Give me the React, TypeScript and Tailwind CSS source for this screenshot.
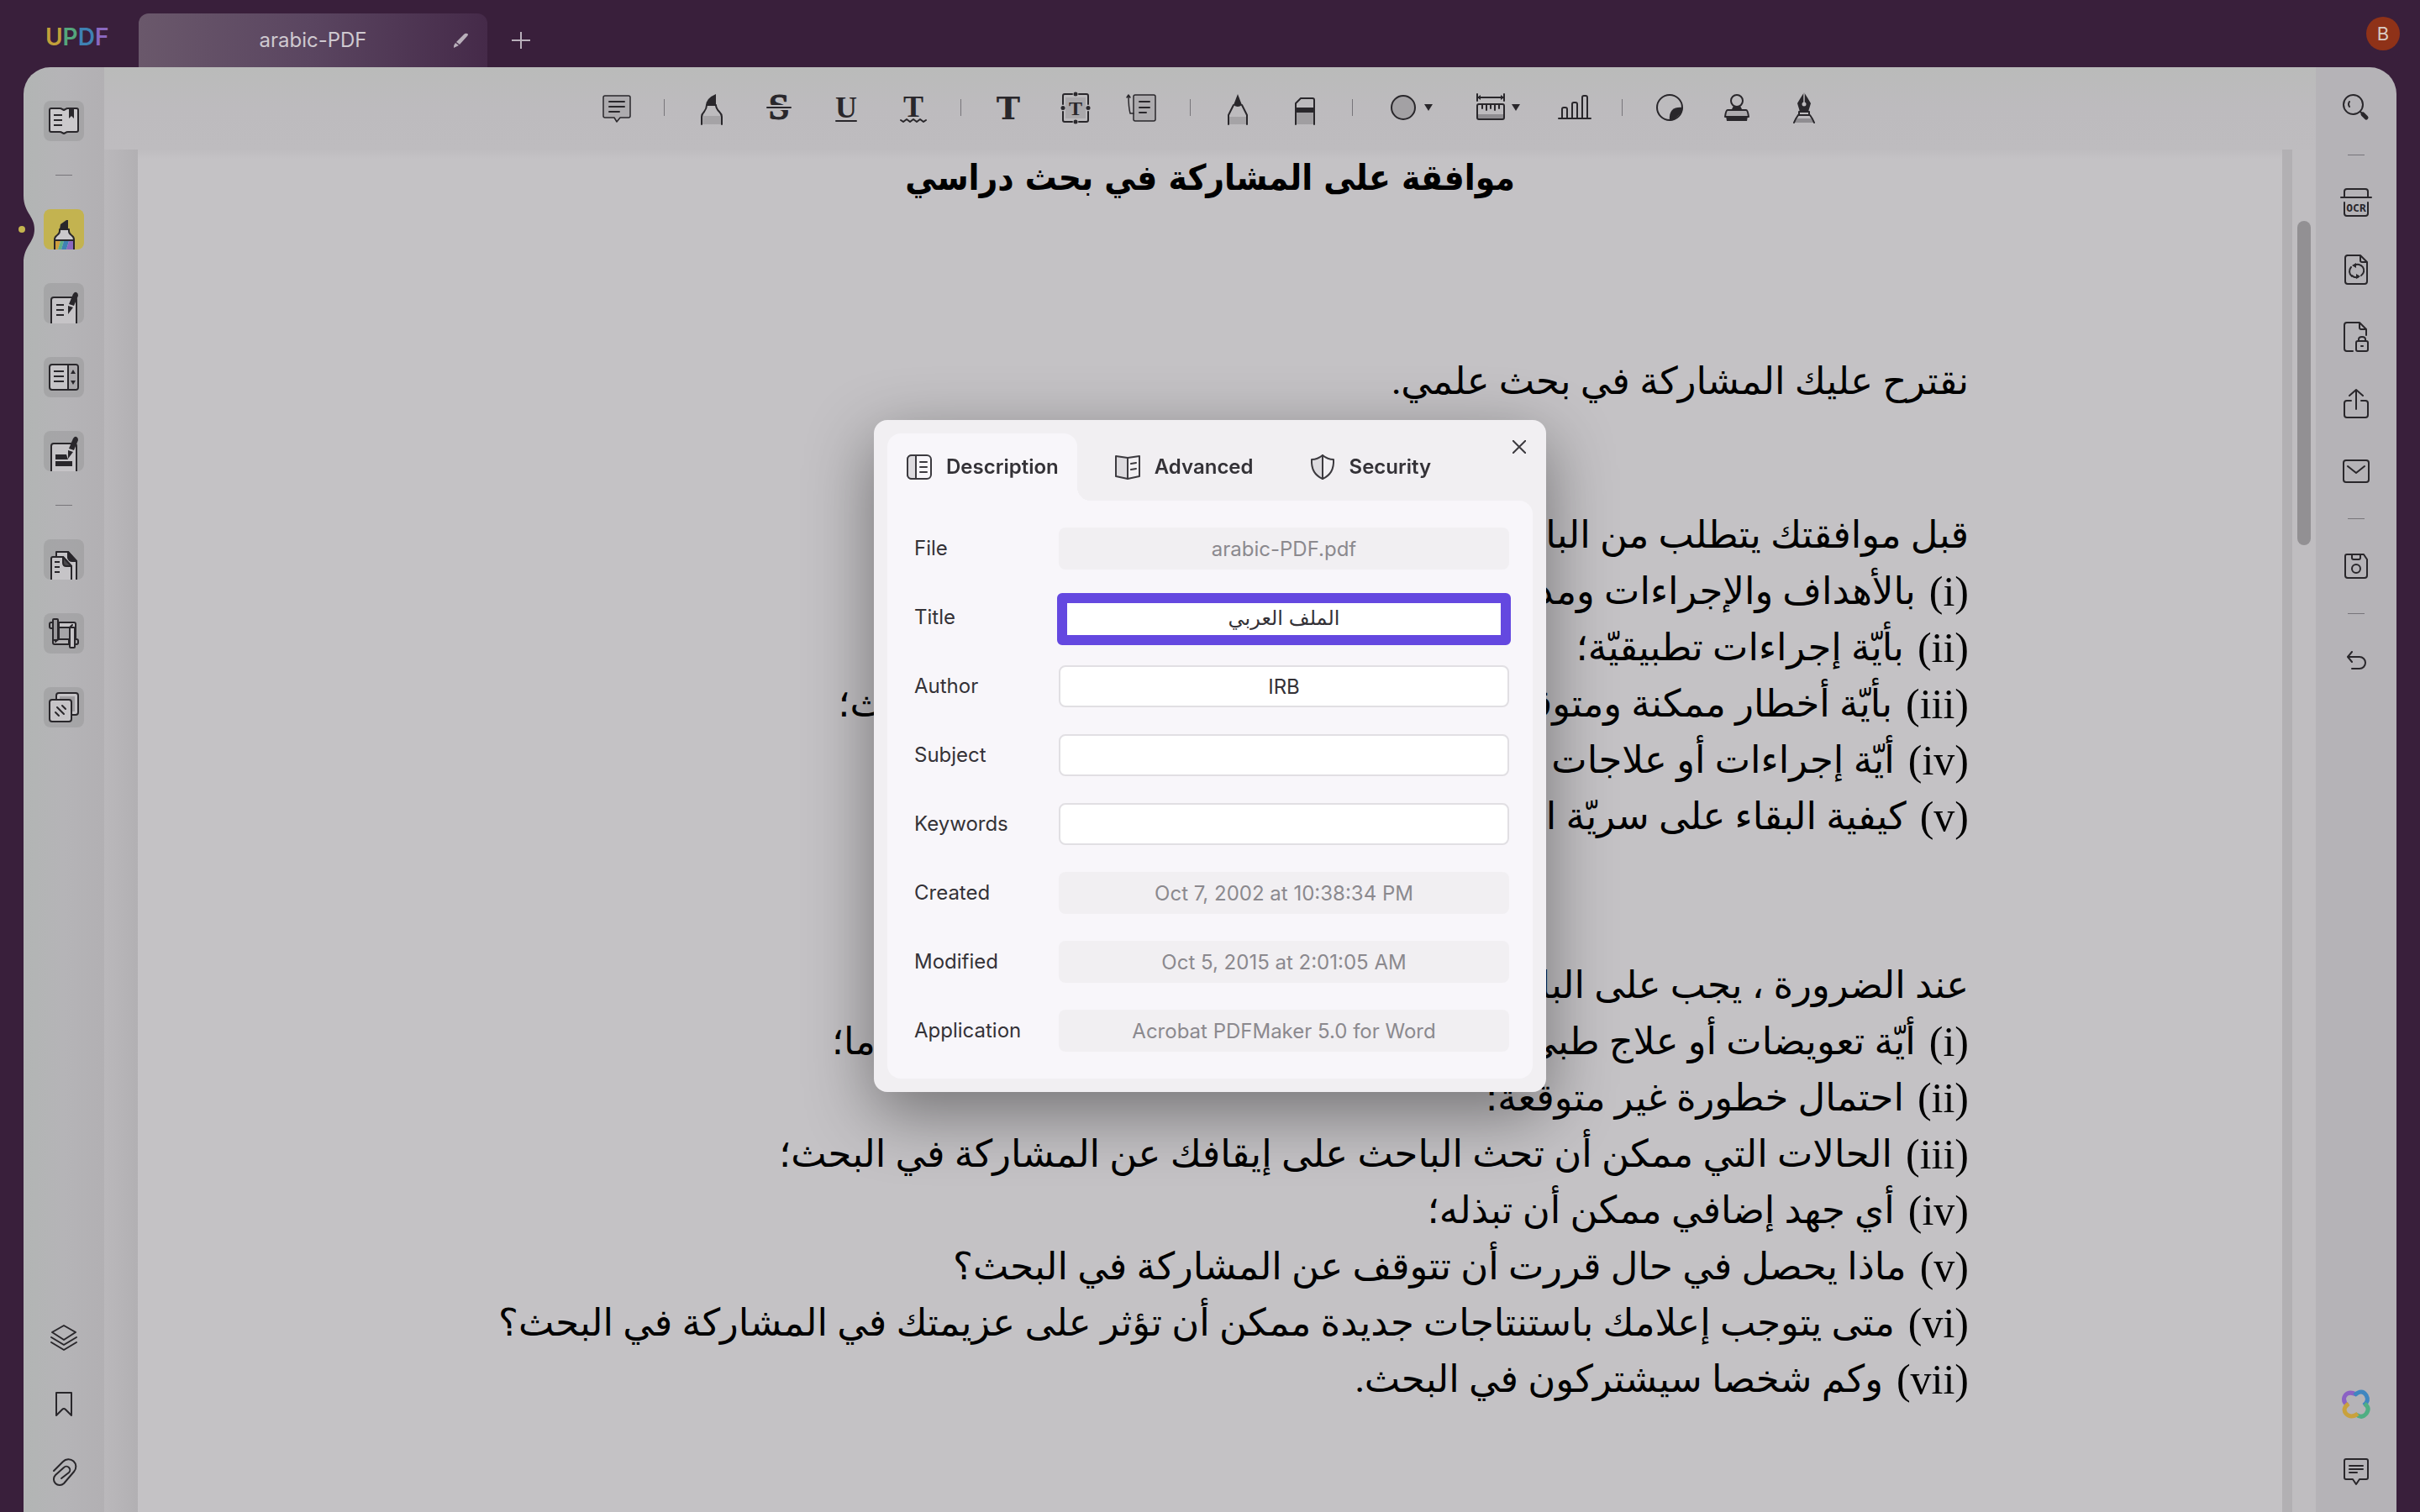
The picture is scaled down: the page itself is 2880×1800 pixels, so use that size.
import type { ReactNode } from "react"
import { useState } from "react"

const INK = "#29272b"

function Icon({ children, className = "size-12" }: { children: ReactNode; className?: string }) {
  return (
    <svg
      viewBox="0 0 48 48"
      className={className}
      fill="none"
      stroke={INK}
      strokeWidth="2"
      strokeLinecap="round"
      strokeLinejoin="round"
      aria-hidden="true"
    >
      {children}
    </svg>
  )
}

function IconButton({ label, className = "", children }: { label: string; className?: string; children: ReactNode }) {
  return (
    <button type="button" aria-label={label} className={`flex h-12 shrink-0 items-center ${className}`}>
      {children}
    </button>
  )
}

function Caret() {
  return (
    <svg viewBox="0 0 12 8" className="h-2 w-3" aria-hidden="true">
      <path d="M1 0h10L6 8z" fill={INK} />
    </svg>
  )
}

const VLine = () => <span className="h-5 w-px shrink-0 bg-[#77757a]" />
const HLine = () => <span className="h-px w-5 shrink-0 bg-[#77757a]" />

function Pen({ d = "" }: { d?: string }) {
  return (
    <g transform={d} stroke="none" fill={INK}>
      <path d="M35 13q2-3 4-2t2 4l-5 12-6-2z" />
      <path d="M29 27l6 2-6 8z" />
    </g>
  )
}

function TopBar() {
  return (
    <header className="flex h-20 shrink-0 items-end pl-[54px] pr-6">
      <a href="#" className="mr-9 flex h-16 w-[75px] items-center pb-2 font-['Inter'] text-[28px] font-semibold leading-7">
        <span className="text-[#c2a03a]">U</span>
        <span className="text-[#54a67c]">P</span>
        <span className="text-[#3f82b4]">D</span>
        <span className="text-[#8a68c0]">F</span>
      </a>
      <div className="flex h-16 w-[415px] items-center rounded-t-xl bg-gradient-to-r from-[#6a586b] via-[#5a4560] to-[#452a49] pl-11 pr-5">
        <span className="flex-1 text-center text-2xl text-[#cfc9d0]">arabic-PDF</span>
        <button type="button" aria-label="Rename">
          <svg viewBox="0 0 24 24" className="size-6" fill="#b9b0bb" aria-hidden="true">
            <path d="M16 5q2-2 4-1t0 3L11 17l-4-3z" />
            <path d="M6 15l4 3-6 3q0-4 2-6z" />
          </svg>
        </button>
      </div>
      <button type="button" aria-label="New tab" className="ml-6 flex h-16 w-8 items-center justify-center">
        <svg viewBox="0 0 24 24" className="size-6" stroke="#b9b0bb" strokeWidth="2" aria-hidden="true">
          <path d="M12 2v20M1 12h22" />
        </svg>
      </button>
      <button
        type="button"
        aria-label="Account"
        className="mb-5 ml-auto size-10 rounded-full bg-[#8f3218] text-[22px] text-[#d9cbc4]"
      >
        B
      </button>
    </header>
  )
}

function LeftBar() {
  const tile = "rounded-lg bg-black/8"
  return (
    <nav className="relative flex w-24 shrink-0 flex-col items-center justify-between rounded-tl-[32px] bg-gradient-to-r from-[#b2b5b4] via-[#b5b4b7] to-[#b2b0b3] pb-6 pt-10">
      {/* notch next to the active tool */}
      <svg viewBox="0 0 24 80" className="absolute -left-2 top-[153px] h-20 w-6" aria-hidden="true">
        <path d="M0 0H8C8 20 21 24 21 40S8 60 8 80H0z" fill="#391f3b" />
        <circle cx="6" cy="40" r="4" fill="#c4b44f" />
      </svg>
      <div className="flex flex-col items-center gap-10">
        <IconButton label="Reader" className={tile}>
          <Icon>
            <path
              d="M9 9h10q2 0 3 1l2 1 2-1q1-1 3-1h10a2 2 0 0 1 2 2v24a2 2 0 0 1-2 2H29q-2 0-3 1l-2 1-2-1q-1-1-3-1H9a2 2 0 0 1-2-2V11a2 2 0 0 1 2-2z"
              fill="#cbc9cc"
            />
            <path d="M12 17h10M12 23h10M12 29h10" strokeLinecap="butt" />
            <path d="M30 9h6v12l-3-3-3 3z" fill={INK} stroke="none" />
          </Icon>
        </IconButton>
        <HLine />
        <IconButton label="Comment" className="overflow-hidden rounded-lg bg-[#c3b350]">
          <Icon>
            <path d="M19 24l1-6 7-5h2v11z" fill={INK} stroke="none" />
            <path d="M19 24h11v2q0 3 3 5t3 5v14H13V36q0-3 3-5t3-5z" fill="#cbc9cc" />
            <path d="M14 38h6l-3 10h-3z" fill="#cf9f3d" stroke="none" />
            <path d="M20 38h4l-3 10h-4z" fill="#5fb089" stroke="none" />
            <path d="M24 38h6l-3 10h-6z" fill="#3f82b4" stroke="none" />
            <path d="M30 38h5v10h-8z" fill="#8a68c0" stroke="none" />
            <path d="M13 37h23" />
          </Icon>
        </IconButton>
        <IconButton label="Edit" className={`overflow-hidden ${tile}`}>
          <Icon>
            <path d="M9 50V20a3 3 0 0 1 3-3h24a3 3 0 0 1 3 3v30" fill="#c6c4c7" />
            <path d="M15 26h9M15 32h9M15 38h9" strokeLinecap="butt" />
            <Pen />
          </Icon>
        </IconButton>
        <IconButton label="Form" className={tile}>
          <Icon>
            <rect x="7" y="9" width="34" height="30" rx="3" fill="#c6c4c7" />
            <path d="M30 10h7a3 3 0 0 1 3 3v22a3 3 0 0 1-3 3h-7z" fill="#aaa8ab" stroke="none" />
            <path d="M29 9v30M12 17h12M12 23h12M12 29h12" strokeLinecap="butt" />
            <path d="M32 20l3-5 3 5zM32 28h6l-3 5z" fill={INK} stroke="none" />
          </Icon>
        </IconButton>
        <IconButton label="Redact" className={`overflow-hidden ${tile}`}>
          <Icon>
            <path d="M9 50V18a3 3 0 0 1 3-3h24a3 3 0 0 1 3 3v32" fill="#c6c4c7" />
            <path d="M14 28h13l2 6H14zM14 36h20v6H14z" fill={INK} stroke="none" />
            <Pen d="translate(0 -4)" />
          </Icon>
        </IconButton>
        <HLine />
        <IconButton label="Organize pages" className={`overflow-hidden ${tile}`}>
          <Icon>
            <path d="M15 50V15h14l10 11v24" fill="#c6c4c7" />
            <path d="M29 15v7q1 4 5 4h5z" fill={INK} />
            <path d="M9 50V23q0-2 2-2h12l10 11v18" fill="#c6c4c7" />
            <path d="M23 21v7q0 4 4 4h6z" fill="#4a484c" />
            <path d="M13 27h6M13 33h6M13 39h6" strokeLinecap="butt" />
          </Icon>
        </IconButton>
        <IconButton label="Crop" className={tile}>
          <Icon>
            <path d="M18 11h18q2 0 2 2v18h-7V17H18z" fill="#c6c4c7" />
            <path d="M11 17v18q0 2 2 2h17v-6H18V17" fill="#b4b2b5" />
            <path d="M11 11H9q-2 0-2 2v3q0 2 2 2h2M37 31h2q2 0 2 2v2q0 2-2 2h-2" />
            <rect x="11" y="7" width="6" height="25" rx="1" fill="#9c9a9d" />
            <rect x="31" y="17" width="6" height="24" rx="1" fill="#c6c4c7" />
            <path d="M31 17l3-3M17 31l-3 3" />
          </Icon>
        </IconButton>
        <IconButton label="Page tools" className={tile}>
          <Icon>
            <rect x="15" y="7" width="26" height="26" rx="3" fill="#c6c4c7" />
            <path d="M19 11h18v18H19z" fill="#a09ea1" stroke="none" />
            <rect x="7" y="15" width="26" height="26" rx="3" fill="#c6c4c7" />
            <path d="M16 24l8 8M22 22l4 4M14 30l4 4" />
          </Icon>
        </IconButton>
      </div>
      <div className="flex flex-col items-center gap-8">
        <IconButton label="Layers">
          <Icon>
            <path d="M24 10l14 8-14 9-14-9z" />
            <path d="M9 24l15 9 15-9M9 30l15 9 15-9" />
          </Icon>
        </IconButton>
        <IconButton label="Bookmarks">
          <Icon>
            <path d="M15 10h18v27l-7-7q-2-2-4 0l-7 7z" />
          </Icon>
        </IconButton>
        <IconButton label="Attachments">
          <Icon>
            <path d="M12 23l11-11a8.500 8.500 0 0 1 13 12L24 38a7 7 0 0 1-10-10l10-9a4 4 0 0 1 6 6l-9 7" />
          </Icon>
        </IconButton>
      </div>
    </nav>
  )
}

function RightBar() {
  return (
    <nav className="flex w-24 shrink-0 flex-col items-center justify-between rounded-tr-[32px] bg-[#b5b3b7] py-6">
      <div className="flex flex-col items-center gap-8">
        <IconButton label="Search">
          <Icon>
            <circle cx="20.500" cy="20.500" r="11.500" />
            <path d="M16 17q-2 3 0 6" />
            <path d="M29 29l3 3" />
            <path d="M32 32l4 4" strokeWidth="5" />
          </Icon>
        </IconButton>
        <HLine />
        <IconButton label="OCR">
          <Icon>
            <path d="M10 18v-7a3 3 0 0 1 3-3h22a3 3 0 0 1 3 3v7M6 18h36M10 24v13a3 3 0 0 0 3 3h22a3 3 0 0 0 3-3V24" />
            <text x="24" y="35" textAnchor="middle" fontSize="13" fill={INK} stroke="none" className="font-['DejaVu_Sans_Mono'] font-bold">
              OCR
            </text>
          </Icon>
        </IconButton>
        <IconButton label="Convert">
          <Icon>
            <path d="M13 7h16l8 8v23a3 3 0 0 1-3 3H14a3 3 0 0 1-3-3V10a3 3 0 0 1 3-3M29 7v6q0 2 2 2h6" />
            <path d="M19 32a7.500 7.500 0 0 1-1-11M22 19a7 7 0 0 1 8 12M26 33q-4 1-7-2" />
            <path d="M19 19l5-3v6zM29 32l-5-3v6z" fill={INK} stroke="none" />
          </Icon>
        </IconButton>
        <IconButton label="Protect">
          <Icon>
            <path d="M20 41h-7a3 3 0 0 1-3-3V10a3 3 0 0 1 3-3h15l8 8v7M28 7v6q0 2 2 2h6" />
            <rect x="24" y="29" width="14" height="12" rx="2" />
            <path d="M27 29v-2q0-3 4-3t4 3v2M30 35h2" />
          </Icon>
        </IconButton>
        <IconButton label="Share">
          <Icon>
            <path d="M24 30V8M16 14l8-7 8 7M18 20h-5a3 3 0 0 0-3 3v14a3 3 0 0 0 3 3h22a3 3 0 0 0 3-3V23a3 3 0 0 0-3-3h-5" />
          </Icon>
        </IconButton>
        <IconButton label="Email">
          <Icon>
            <rect x="9" y="11" width="30" height="26" rx="3" />
            <path d="M14 18l10 8 10-8" />
          </Icon>
        </IconButton>
        <HLine />
        <IconButton label="Save">
          <Icon>
            <path d="M13 10h20l4 6v19a3 3 0 0 1-3 3H14a3 3 0 0 1-3-3V12q0-2 2-2zM19 10v4q0 2 2 2h6q2 0 2-2v-4" />
            <circle cx="24" cy="27" r="5" />
          </Icon>
        </IconButton>
        <HLine />
        <IconButton label="Undo">
          <Icon>
            <path d="M19 13l-5 6 5 6M14 19h14a7 7 0 0 1 0 14h-9" />
          </Icon>
        </IconButton>
      </div>
      <div className="flex flex-col items-center gap-8">
        <IconButton label="UPDF AI">
          <Icon>
            <g strokeWidth="5" strokeLinecap="butt">
              <path d="M14 25q-6-4-4-10 4-8 14-3" stroke="#8b62c4" />
              <path d="M22 13q9-8 14 0 4 7-3 12" stroke="#3f86c0" />
              <path d="M34 23q7 5 2 12-5 6-12 1" stroke="#4fae83" />
              <path d="M26 35q-8 6-14 0-5-6 3-12" stroke="#c9a13c" />
            </g>
          </Icon>
        </IconButton>
        <IconButton label="Comments">
          <Icon>
            <path d="M12 9h24q2 0 2 2v20q0 2-2 2h-8l-4 6-4-6h-8q-2 0-2-2V11q0-2 2-2zM16 17h16M16 21h16M16 25h9" />
          </Icon>
        </IconButton>
      </div>
    </nav>
  )
}

function Toolbar() {
  return (
    <div className="flex h-[98px] shrink-0 items-start justify-center bg-gradient-to-b from-[#babbba] via-[#bdbbbe] to-[#bebcbf] pt-6">
      <div className="flex items-center gap-8">
        <IconButton label="Note">
          <Icon>
            <path d="M10 10h28q2 0 2 2v22q0 2-2 2H28l-4 5-3-5H10q-2 0-2-2V12q0-2 2-2z" fill="#adabae" strokeWidth="1.500" />
            <path d="M15 17h18M15 23h18M15 29h12" />
          </Icon>
        </IconButton>
        <VLine />
        <IconButton label="Highlight">
          <Icon>
            <path d="M17 22q0-9 12-14v14z" fill={INK} stroke="none" />
            <path d="M12 34h24v10H12z" fill="#a5a3a6" stroke="none" />
            <path d="M18 21h11q0 4 4 8 3 3 3 6v9M12 44v-9q0-3 3-6 3-4 3-8" />
          </Icon>
        </IconButton>
        <IconButton label="Strikethrough">
          <Icon>
            <text x="24" y="38" textAnchor="middle" fontSize="44" fill={INK} stroke={INK} strokeWidth="1" className="font-['Liberation_Serif'] font-bold">
              S
            </text>
            <path d="M8 24h32" stroke="#bdbbbe" strokeWidth="6" strokeLinecap="butt" />
            <path d="M10 24h28" />
          </Icon>
        </IconButton>
        <IconButton label="Underline">
          <Icon>
            <text x="24" y="36" textAnchor="middle" fontSize="36" fill={INK} stroke="none" className="font-['Liberation_Serif'] font-bold">
              U
            </text>
            <path d="M12 40h24" />
          </Icon>
        </IconButton>
        <IconButton label="Squiggly">
          <Icon>
            <text x="24" y="35" textAnchor="middle" fontSize="36" fill={INK} stroke="none" className="font-['Liberation_Serif'] font-bold">
              T
            </text>
            <path d="M9 39l3 2 4-3 4 3 4-3 4 3 4-3 4 3 3-2" />
          </Icon>
        </IconButton>
        <VLine />
        <IconButton label="Text">
          <Icon>
            <text x="24" y="38" textAnchor="middle" fontSize="38" fill={INK} stroke="none" className="font-['DejaVu_Serif'] font-bold">
              T
            </text>
          </Icon>
        </IconButton>
        <IconButton label="Text box">
          <Icon>
            <path d="M12 12h24v25H12z" fill="#aaa8ab" stroke="none" />
            <path d="M20 8h-9q-2 0-2 2v10M28 8h9q2 0 2 2v10M20 41h-9q-2 0-2-2V29M28 41h9q2 0 2-2V29" />
            <g fill={INK} stroke="none">
              <circle cx="24" cy="8" r="2.500" />
              <circle cx="24" cy="41" r="2.500" />
              <circle cx="9" cy="24.500" r="2.500" />
              <circle cx="39" cy="24.500" r="2.500" />
            </g>
            <text x="24" y="33" textAnchor="middle" fontSize="24" fill={INK} stroke="none" className="font-['Liberation_Serif'] font-bold">
              T
            </text>
          </Icon>
        </IconButton>
        <IconButton label="Callout">
          <Icon>
            <rect x="13" y="9" width="26" height="31" rx="2" fill="#adabae" strokeWidth="1.500" />
            <path d="M13 31h-4q-2-8-2-21M5 12l2-3 2 3" strokeWidth="1.500" />
            <path d="M20 17h12M20 24h12M20 30h8" />
          </Icon>
        </IconButton>
        <VLine />
        <IconButton label="Pencil">
          <Icon>
            <path d="M13 35h22v9H13z" fill="#a5a3a6" stroke="none" />
            <path d="M24 8l5 13q-5 4-10 0z" fill={INK} stroke="none" />
            <path d="M19 21l-6 12v11M29 21l6 12v11" />
          </Icon>
        </IconButton>
        <IconButton label="Eraser">
          <Icon>
            <path d="M13 30h22v14H13z" fill="#a09ea1" stroke="none" />
            <path d="M13 44V19l6-6h14q2 0 2 2v29" />
            <path d="M13 24h22v6H13z" fill={INK} stroke="none" />
          </Icon>
        </IconButton>
        <VLine />
        <IconButton label="Shapes" className="w-[72px] pl-1">
          <Icon>
            <circle cx="24" cy="24" r="14" fill="#a3a1a4" />
          </Icon>
          <Caret />
        </IconButton>
        <IconButton label="Measure" className="w-[72px] pl-1">
          <Icon>
            <path d="M8 32h32v3q0 3-3 3H11q-3 0-3-3z" fill="#8f8d91" stroke="none" />
            <rect x="8" y="20" width="32" height="18" rx="2" />
            <path d="M14 21v4M19 21v6M24 21v4M29 21v6M34 21v4M8 12h32M8 8v8M40 8v8" />
            <path d="M8 12l4-3v6zM40 12l-4-3v6z" fill={INK} stroke="none" />
          </Icon>
          <Caret />
        </IconButton>
        <IconButton label="Chart">
          <Icon>
            <path d="M5 37h38M9 37V26q0-2 2-2h2q2 0 2 2v11M21 37V20q0-2 2-2h2q2 0 2 2v17M33 37V12q0-2 2-2h2q2 0 2 2v25" />
          </Icon>
        </IconButton>
        <VLine />
        <IconButton label="Sticker">
          <Icon>
            <circle cx="24" cy="24" r="15" />
            <path d="M24 40q-1-9 3-13t13-3q-1 5-6 10t-10 6z" fill={INK} stroke="none" />
          </Icon>
        </IconButton>
        <IconButton label="Stamp">
          <Icon>
            <circle cx="24" cy="16" r="7" />
            <path d="M20 22h8l2 4H18z" fill={INK} stroke="none" />
            <path d="M13 27h22q2 0 3 8H10q1-8 3-8z" fill="#adabae" />
            <path d="M11 34h26l-1 6H12z" fill={INK} stroke="none" />
          </Icon>
        </IconButton>
        <IconButton label="Signature">
          <Icon>
            <path d="M24 6q4 6 8 13l-3 10H19l-3-10q4-7 8-13z" fill={INK} stroke="none" />
            <path d="M24 6v13" stroke="#bdbbbe" strokeWidth="1.500" />
            <circle cx="24" cy="20" r="2.500" fill="#bdbbbe" stroke="none" />
            <path d="M14 37h20l3 5H11z" fill="#8f8d91" stroke="none" />
            <path d="M18 29h12v4H18zM17 33h14q3 4 5 9M17 33q-3 4-5 9" />
          </Icon>
        </IconButton>
      </div>
    </div>
  )
}

const firstList = [
  ["(i)", "بالأهداف والإجراءات ومدة البحث؛"],
  ["(ii)", "بأيّة إجراءات تطبيقيّة؛"],
  ["(iii)", "بأيّة أخطار ممكنة ومتوقعة ناتجة عن مشاركتك أو انسحابك من البحث؛"],
  ["(iv)", "أيّة إجراءات أو علاجات بديلة؛"],
  ["(v)", "كيفية البقاء على سريّة المعلومات."],
]

const secondList = [
  ["(i)", "أيّة تعويضات أو علاج طبي متوفر في حال تعرضكم لأي ضرر أو إصابة ما؛"],
  ["(ii)", "احتمال خطورة غير متوقعة؛"],
  ["(iii)", "الحالات التي ممكن أن تحث الباحث على إيقافك عن المشاركة في البحث؛"],
  ["(iv)", "أي جهد إضافي ممكن أن تبذله؛"],
  ["(v)", "ماذا يحصل في حال قررت أن تتوقف عن المشاركة في البحث؟"],
  ["(vi)", "متى يتوجب إعلامك باستنتاجات جديدة ممكن أن تؤثر على عزيمتك في المشاركة في البحث؟"],
  ["(vii)", "وكم شخصا سيشتركون في البحث."],
]

function List({ rows }: { rows: string[][] }) {
  return (
    <ol>
      {rows.map(([mark, text]) => (
        <li key={text} className="flex gap-4">
          <span className="text-[50px]">{mark}</span>
          <span>{text}</span>
        </li>
      ))}
    </ol>
  )
}

function Document() {
  return (
    <div className="flex min-h-0 flex-1">
      <div className="w-10 shrink-0 bg-gradient-to-r from-[#bab8bb] to-[#b2b0b3]" />
      <article dir="rtl" className="min-w-0 flex-1 overflow-hidden bg-gradient-to-b from-[#bebcbf] to-[#c4c2c5] to-[12px]">
        <div className="mx-auto max-w-[1806px] whitespace-nowrap font-['Liberation_Serif','DejaVu_Sans',serif] text-[45px] leading-[67px] text-black">
          <h1 className="text-center font-['DejaVu_Sans_Condensed','DejaVu_Sans',serif] text-[42px] font-bold">
            موافقة على المشاركة في بحث دراسي
          </h1>
          <p className="mt-[176px]">نقترح عليك المشاركة في بحث علمي.</p>
          <p className="mt-[116px]">قبل موافقتك يتطلب من الباحث أن يعلمك:</p>
          <List rows={firstList} />
          <p className="mt-[134px]">عند الضرورة ، يجب على الباحث أن يعلمك:</p>
          <List rows={secondList} />
        </div>
      </article>
      <div className="w-3 shrink-0 bg-[#b2b0b3]" />
      <div className="w-7 shrink-0 bg-[#bfbdc0] px-1.5 pt-[85px]">
        <div className="h-[386px] rounded-full bg-[#929093]" />
      </div>
    </div>
  )
}

const fields = [
  { id: "file", label: "File", value: "arabic-PDF.pdf", locked: true },
  { id: "title", label: "Title", value: "الملف العربي" },
  { id: "author", label: "Author", value: "IRB" },
  { id: "subject", label: "Subject", value: "" },
  { id: "keywords", label: "Keywords", value: "" },
  { id: "created", label: "Created", value: "Oct 7, 2002 at 10:38:34 PM", locked: true },
  { id: "modified", label: "Modified", value: "Oct 5, 2015 at 2:01:05 AM", locked: true },
  { id: "application", label: "Application", value: "Acrobat PDFMaker 5.0 for Word", locked: true },
]

const tabs = [
  {
    name: "Description",
    icon: (
      <>
        <rect x="2" y="2" width="28" height="28" rx="5" />
        <path d="M12 2v28H7a5 5 0 0 1-5-5V7a5 5 0 0 1 5-5z" fill="#dddbdf" />
        <path d="M17 10h8M17 16h8M17 22h8" />
      </>
    ),
  },
  {
    name: "Advanced",
    icon: (
      <>
        <path d="M2 3l14 2v25L2 27z" fill="#dddbdf" />
        <path d="M16 5l14-2v24l-14 3zM20 12l6-1M20 19l6-1" />
      </>
    ),
  },
  {
    name: "Security",
    icon: (
      <>
        <path d="M16 2q6 5 13 5 1 17-13 23z" />
        <path d="M16 2q-6 5-13 5-1 17 13 23z" fill="#dddbdf" />
      </>
    ),
  },
]

function PropertiesDialog() {
  const [active, setActive] = useState("Description")

  return (
    <div className="fixed inset-0 flex items-center justify-center">
      <div
        role="dialog"
        aria-label="Document properties"
        className="relative w-[800px] rounded-2xl bg-[#f1eff2] p-4 shadow-[0_24px_80px_rgba(0,0,0,0.42)]"
      >
        <button type="button" aria-label="Close" className="absolute right-5 top-5 p-1">
          <svg viewBox="0 0 16 16" className="size-4" stroke="#3c3a3f" strokeWidth="2" aria-hidden="true">
            <path d="M0 0l16 16M16 0L0 16" />
          </svg>
        </button>
        <div className="flex gap-[22px]">
          {tabs.map((tab) => (
            <button
              key={tab.name}
              type="button"
              onClick={() => setActive(tab.name)}
              className={`relative flex h-20 items-center gap-4 rounded-t-2xl px-[22px] text-2xl font-semibold text-[#343237] ${
                active === tab.name ? "bg-[#f8f6fa]" : ""
              }`}
            >
              <svg
                viewBox="0 0 32 32"
                className="size-8"
                fill="none"
                stroke="#3c3a3f"
                strokeWidth="2"
                strokeLinecap="round"
                strokeLinejoin="round"
                aria-hidden="true"
              >
                {tab.icon}
              </svg>
              {tab.name}
              {active === tab.name && (
                <span className="absolute bottom-0 left-full size-4 bg-[radial-gradient(circle_at_top_right,transparent_16px,#f8f6fa_16px)]" />
              )}
            </button>
          ))}
        </div>
        <form className="flex flex-col gap-8 rounded-b-2xl rounded-tr-2xl bg-[#f8f6fa] py-8 pl-8 pr-7">
          {fields.map((field) => (
            <div key={field.id} className="flex h-[50px] items-center text-2xl">
              <label htmlFor={field.id} className="w-[172px] shrink-0 text-[#343237]">
                {field.label}
              </label>
              <input
                id={field.id}
                type="text"
                defaultValue={field.value}
                disabled={field.locked}
                className={`min-w-0 flex-1 text-center outline-none ${
                  field.locked
                    ? "h-[50px] rounded-lg bg-[#f1eff2] text-[#8b898e]"
                    : field.id === "title"
                      ? "-mx-0.5 mt-1 h-[62px] rounded-md border-12 border-[#6448e0] bg-white pb-1 text-[#343237]"
                      : "h-[50px] rounded-lg border-2 border-[#e1dfe3] bg-white text-[#343237]"
                }`}
              />
            </div>
          ))}
        </form>
      </div>
    </div>
  )
}

export default function App() {
  return (
    <div className="flex h-screen flex-col overflow-hidden bg-[#391f3b] font-['Inter','DejaVu_Sans',sans-serif]">
      <TopBar />
      <div className="mx-7 flex min-h-0 flex-1">
        <LeftBar />
        <main className="flex min-w-0 flex-1 flex-col">
          <Toolbar />
          <Document />
        </main>
        <RightBar />
      </div>
      <PropertiesDialog />
    </div>
  )
}
